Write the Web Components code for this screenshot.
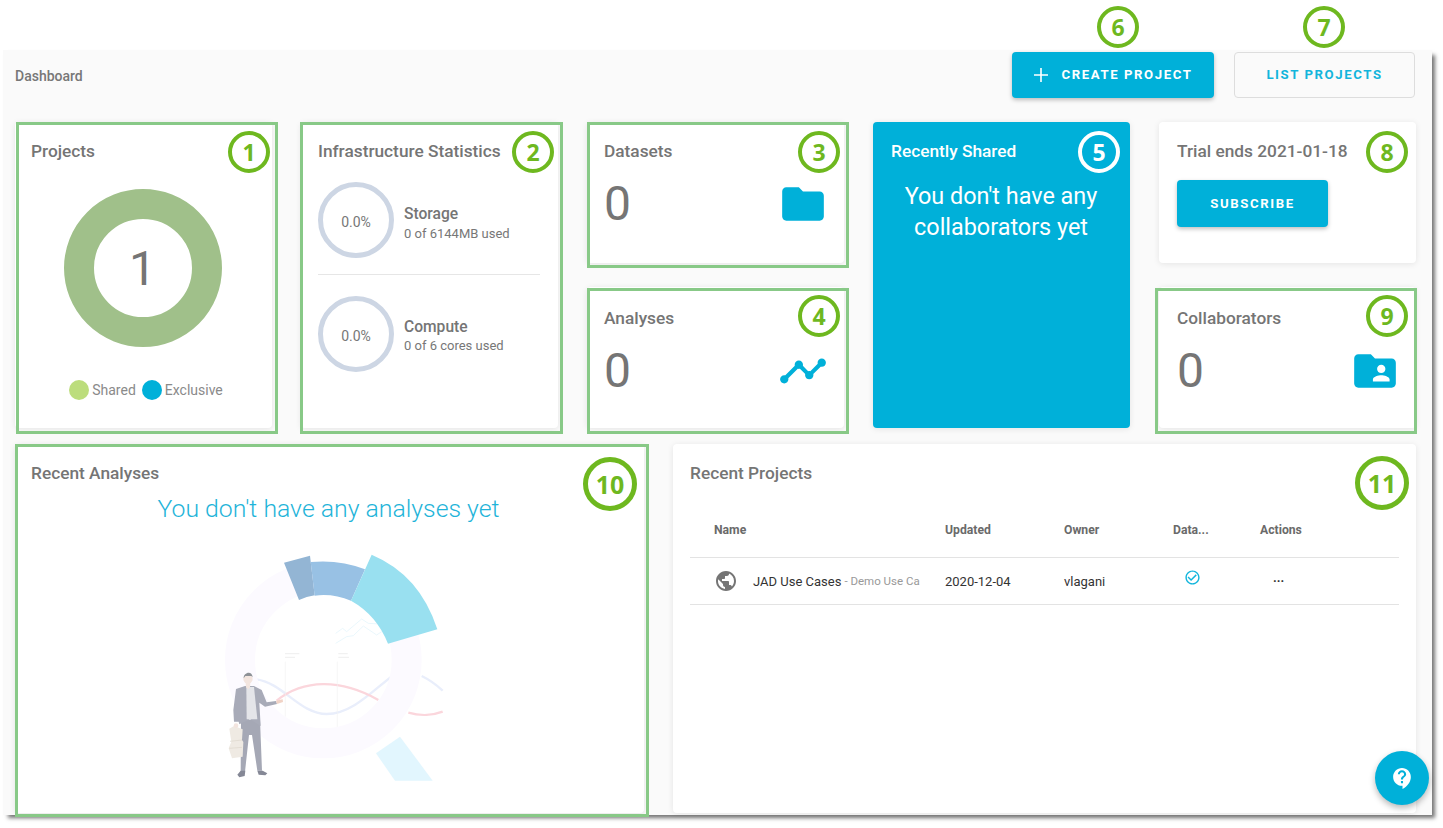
<!DOCTYPE html>
<html lang="en">
<head>
<meta charset="utf-8">
<title>Dashboard</title>
<style>
html,body{margin:0;padding:0;background:#fff;font-family:Roboto,"Liberation Sans",sans-serif;}
body{width:1443px;height:828px;overflow:hidden;position:relative;}
svg{display:block}
</style>
</head>
<body>
<dash-app>
  <dash-header slot="header"></dash-header>
  <project-donut></project-donut>
  <infra-card></infra-card>
  <stat-card heading="Datasets" value="0"><svg slot="icon" width="50" height="50" viewBox="0 0 24 24" fill="#00b0d9"><path d="M10 4H4c-1.1 0-1.99.9-1.99 2L2 18c0 1.1.9 2 2 2h16c1.1 0 2-.9 2-2V8c0-1.1-.9-2-2-2h-8l-2-2z"/></svg></stat-card>
  <stat-card heading="Analyses" value="0" style="padding-top:21px"><svg slot="icon" width="50" height="50" viewBox="0 0 24 24" fill="#00b0d9"><path d="M23 8c0 1.1-.9 2-2 2-.18 0-.35-.02-.51-.07l-3.56 3.55c.05.16.07.34.07.52 0 1.1-.9 2-2 2s-2-.9-2-2c0-.18.02-.36.07-.52l-2.55-2.55c-.16.05-.34.07-.52.07s-.36-.02-.52-.07l-4.55 4.56c.05.16.07.33.07.51 0 1.1-.9 2-2 2s-2-.9-2-2 .9-2 2-2c.18 0 .35.02.51.07l4.56-4.55C8.02 9.36 8 9.18 8 9c0-1.1.9-2 2-2s2 .9 2 2c0 .18-.02.36-.07.52l2.55 2.55c.16-.05.34-.07.52-.07s.36.02.52.07l3.55-3.56C19.02 8.35 19 8.18 19 8c0-1.1.9-2 2-2s2 .9 2 2z"/></svg></stat-card>
  <shared-card></shared-card>
  <trial-card></trial-card>
  <stat-card heading="Collaborators" value="0" style="padding-top:21px;padding-left:18px"><svg slot="icon" width="50" height="50" viewBox="0 0 24 24" fill="#00b0d9"><path fill-rule="evenodd" d="M20 6h-8l-2-2H4c-1.1 0-1.99.9-1.99 2L2 18c0 1.1.9 2 2 2h16c1.1 0 2-.9 2-2V8c0-1.1-.9-2-2-2zm-5 3c1.1 0 2 .9 2 2s-.9 2-2 2-2-.9-2-2 .9-2 2-2zm4 8h-8v-1c0-1.33 2.67-2 4-2s4 .67 4 2v1z"/></svg></stat-card>
  <analyses-card slot="bottom"></analyses-card>
  <projects-table slot="bottom"></projects-table>
</dash-app>
<help-fab></help-fab>

<note-box x="16" y="122" w="262" h="312"></note-box>
<note-box x="300" y="122" w="263" h="312"></note-box>
<note-box x="587" y="122" w="262" h="146"></note-box>
<note-box x="587" y="288" w="262" h="146"></note-box>
<note-box x="1155" y="288" w="262" h="146"></note-box>
<note-box x="15" y="444" w="634" h="373"></note-box>

<note-badge n="1" cx="249" cy="152"></note-badge>
<note-badge n="2" cx="533" cy="152"></note-badge>
<note-badge n="3" cx="819" cy="152"></note-badge>
<note-badge n="4" cx="819" cy="316"></note-badge>
<note-badge n="5" cx="1099" cy="152" white></note-badge>
<note-badge n="6" cx="1118" cy="27"></note-badge>
<note-badge n="7" cx="1324" cy="27"></note-badge>
<note-badge n="8" cx="1387" cy="152"></note-badge>
<note-badge n="9" cx="1387" cy="316"></note-badge>
<note-badge n="10" cx="610" cy="484" big></note-badge>
<note-badge n="11" cx="1382" cy="483" big></note-badge>

<script>
const base = `*{box-sizing:border-box} svg{display:block}`;
function comp(name, html, setup){
  customElements.define(name, class extends HTMLElement{
    constructor(){super();this.attachShadow({mode:'open'});}
    connectedCallback(){
      this.shadowRoot.innerHTML = typeof html==='function'?html(this):html;
      if(setup)setup(this);
    }
  });
}
const cardCss = `:host{display:block;box-sizing:border-box;background:#fff;border-radius:4px;box-shadow:0 1px 6px rgba(0,0,0,.09);padding:19px 16px 0 17px;color:#666;font-family:Roboto,"Liberation Sans",sans-serif;overflow:hidden}
h2{margin:0;font-size:17.3px;line-height:20px;font-weight:500;color:#757575;white-space:nowrap}`;

comp('dash-app', `<style>${base}
:host{display:block;box-sizing:border-box;width:1429px;height:765px;margin:50px 0 0 3px;background:#fafafa;padding:2px 16px 0 12px;box-shadow:4px 4px 4px -1px rgba(0,0,0,.55)}
.top{display:grid;grid-auto-flow:column;grid-template-columns:repeat(5,257px);grid-template-rows:141px 141px;column-gap:29px;row-gap:24px;margin-top:24px}
.bottom{display:grid;grid-template-columns:629px 743px;column-gap:29px;grid-template-rows:369px;margin-top:16px}
</style>
<slot name="header"></slot>
<div class="top"><slot></slot></div>
<div class="bottom"><slot name="bottom"></slot></div>`);

comp('dash-header', `<style>${base}
:host{display:flex;align-items:center;height:46px;font-family:Roboto,"Liberation Sans",sans-serif;padding-right:1px}
.t{font-size:14px;color:#777;font-weight:500;flex:1;padding-top:2px}
.b{height:46px;border-radius:4px;display:flex;align-items:center;justify-content:center;font-size:13.2px;font-weight:700;letter-spacing:1.58px;white-space:nowrap;padding-bottom:1px}
.c{width:202px;background:#00b0d9;color:#fff;box-shadow:0 2px 4px rgba(0,0,0,.25);gap:13px;padding-right:1px;margin-right:20px}
.l{width:181px;border:1px solid #ddd;color:#12b5dc;background:#fafafa}
</style>
<div class="t">Dashboard</div>
<div class="b c"><svg width="16" height="16" viewBox="0 0 16 16"><path d="M8 1v14M1 8h14" stroke="#fff" stroke-width="1.6"/></svg><span>CREATE PROJECT</span></div>
<div class="b l">LIST PROJECTS</div>`);

comp('project-donut', `<style>${base}${cardCss}
:host{grid-row:span 2;padding-left:16px}
.d{position:relative;width:158px;height:158px;margin:28px auto 0 auto;display:flex;align-items:center;justify-content:center;left:-1px}
.d svg{position:absolute;left:0;top:0}
.n{font-size:48px;font-weight:400;color:#757575;position:relative}
.lg{display:flex;align-items:center;justify-content:center;margin:33px 0 0 5px;font-size:14px;color:#8a8a8a;height:20px}
i{width:20px;height:20px;border-radius:50%;display:block;margin-right:3px}
.g{background:#bcdd7c}.b{background:#00b0d9;margin-left:6px}
</style>
<h2>Projects</h2>
<div class="d"><svg width="158" height="158" viewBox="0 0 158 158"><circle cx="79" cy="79" r="64" fill="none" stroke="#a0c08a" stroke-width="30"/></svg><span class="n">1</span></div>
<div class="lg"><i class="g"></i>Shared<i class="b"></i>Exclusive</div>`);

comp('infra-card', `<style>${base}${cardCss}
:host{grid-row:span 2}
.r{display:flex;gap:10px;align-items:flex-start}
.ring{width:76px;height:76px;border:5px solid #cdd6e4;border-radius:50%;display:flex;align-items:center;justify-content:center;font-size:14px;color:#777;padding-top:4px;flex:none}
.x{padding-top:22px}
.a{font-size:15.6px;font-weight:500;line-height:20px;color:#757575}
.s{font-size:13px;line-height:20px;color:#777;white-space:nowrap}
hr{border:0;height:1px;background:#e6e6e6;margin:16px 2px 21px 0}
</style>
<h2>Infrastructure Statistics</h2>
<div class="r" style="margin-top:21px"><div class="ring">0.0%</div><div class="x"><div class="a">Storage</div><div class="s">0 of 6144MB used</div></div></div>
<hr>
<div class="r"><div class="ring">0.0%</div><div class="x" style="padding-top:21px"><div class="a">Compute</div><div class="s" style="line-height:18px">0 of 6 cores used</div></div></div>`);

comp('stat-card', el=>`<style>${base}${cardCss}
.w{display:flex;align-items:center;justify-content:space-between;margin-top:15px;height:56px}
.v{font-size:48px;font-weight:400;color:#757575;line-height:56px}
</style>
<h2>${el.getAttribute('heading')}</h2>
<div class="w"><span class="v">${el.getAttribute('value')}</span><slot name="icon"></slot></div>`);

comp('shared-card', `<style>${base}${cardCss}
:host{grid-row:span 2;background:#00b0d9;padding-left:18px}
h2{color:#fff}
p{margin:20px 0 0 -1px;text-align:center;color:#fff;font-size:23.4px;font-weight:400;line-height:31px;padding-right:2px}
</style>
<h2>Recently Shared</h2>
<p>You don't have any<br>collaborators yet</p>`);

comp('trial-card', `<style>${base}${cardCss}
:host{padding-left:18px;overflow:visible}
.b{width:151px;height:47px;margin-top:19px;background:#00b0d9;color:#fff;font-size:13.2px;font-weight:700;letter-spacing:1.58px;border-radius:4px;display:flex;align-items:center;justify-content:center;box-shadow:0 2px 4px rgba(0,0,0,.25);padding-bottom:1px}
</style>
<h2>Trial ends 2021-01-18</h2>
<div class="b">SUBSCRIBE</div>`);

comp('analyses-card', `<style>${base}${cardCss}
:host{padding-left:16px}
p{margin:11px 2px 0 0;text-align:center;font-size:24.8px;font-weight:300;color:#1fb4d9;line-height:30px;white-space:nowrap}
svg{margin:16px 0 0 119px}
</style>
<h2>Recent Analyses</h2>
<p>You don't have any analyses yet</p>
<svg width="320" height="260" viewBox="0 0 960 780">
 <path d="M750 590L848 722H735L678 640z" fill="#e2f6fe"/>
 <path d="M320 418C400 430 450 522 530 522C610 522 680 440 725 410M815 408C840 420 860 435 878 452" fill="none" stroke="#e9eefb" stroke-width="7"/>
 <path d="M380 482C460 418 570 415 685 480M775 518C810 528 850 526 878 515" fill="none" stroke="#fbd6dc" stroke-width="7"/>
 <path d="M406 365V530M562 365V565" stroke="#f3f3f3" stroke-width="2"/>
 <path d="M405 341h43M405 352h30M565 341h28M565 352h32" stroke="#f1f1f1" stroke-width="4"/>
 <path d="M557 280L578 265L590 275L635 237L655 250L690 252M557 310L590 290L610 287L640 258L680 285L695 275" fill="none" stroke="#dff3fb" stroke-width="2"/>
 <circle cx="520" cy="360" r="250" fill="none" stroke="#fcfaff" stroke-width="90"/>
 <path d="M402 68L480 47L494 166Q470 170 447 180z" fill="#93b5d4"/>
 <path d="M482 66Q570 58 645 88L603 182Q550 160 494 167z" fill="#98c1e4"/>
 <path d="M665 44Q810 105 862 268L714 311Q680 225 603 182z" fill="#99e0f0"/>
 <path d="M273 540H330L336 692H322L306 585H297L285 695H272z" fill="#a5a8b5"/>
 <path d="M258 447L285 438H312L335 450L350 487L378 483L381 492L345 500L328 488L332 558L300 538L268 553L266 545L252 545L250 510z" fill="#a8abb8"/>
 <path d="M289 441H312L322 538H290z" fill="#e4e5e9"/>
 <path d="M262 704L272 692H286L284 708L268 712zM322 692H338L352 700L346 706L326 704z" fill="#858896"/>
 <circle cx="294" cy="417" r="14" fill="#f3e5df"/>
 <path d="M281 415C280 398 306 390 308 412L304 408H286z" fill="#8d9196"/>
 <path d="M287 428H301L300 442L295 448L288 442z" fill="#f3e5df"/>
 <path d="M378 482L398 478L399 486L381 492z" fill="#f1d3c6"/>
 <path d="M238 566L252 558L278 568L276 600L280 606L278 650L246 655L236 625L244 605z" fill="#efeae3"/>
 <path d="M240 604L276 600M238 625L276 622" stroke="#ddd6cc" stroke-width="2" fill="none"/>
 <circle cx="258" cy="557" r="7" fill="#f3e5df"/>
</svg>`);

comp('projects-table', `<style>${base}${cardCss}
:host{padding:19px 17px 0 17px;overflow:visible}
.t{margin-top:27px;width:709px}
.g{display:grid;grid-template-columns:255px 119px 109px 87px 1fr;align-items:center}
.h{height:48px;font-size:12.2px;font-weight:700;color:#6a6a6a;border-bottom:1px solid #e3e3e3;padding-bottom:8px}
.h>:first-child{padding-left:24px}
.h>*{white-space:nowrap}
.r{height:47px;font-size:13px;color:#333;border-bottom:1px solid #e3e3e3}
.n{display:flex;align-items:center;padding-left:24px;white-space:nowrap}
.n svg{flex:none;margin-right:15px}
.d{font-size:11.5px;color:#999;margin-left:3px;display:block}
.n b{font-weight:400;font-size:13px}
.dots{font-weight:700;font-size:13px;padding-left:13px;margin-top:-8px}
.ok{padding-left:11px;margin-top:-8px}
</style>
<h2>Recent Projects</h2>
<div class="t">
 <div class="g h"><div>Name</div><div>Updated</div><div>Owner</div><div>Data...</div><div>Actions</div></div>
 <div class="g r">
  <div class="n"><svg width="24" height="24" viewBox="0 0 24 24" fill="#757575"><path d="M12 2C6.48 2 2 6.48 2 12s4.48 10 10 10 10-4.48 10-10S17.52 2 12 2zm-1 17.93c-3.95-.49-7-3.85-7-7.93 0-.62.08-1.21.21-1.79L9 15v1c0 1.1.9 2 2 2v1.93zm6.9-2.54c-.26-.81-1-1.39-1.9-1.39h-1v-3c0-.55-.45-1-1-1H8v-2h2c.55 0 1-.45 1-1V7h2c1.1 0 2-.9 2-2v-.41c2.93 1.19 5 4.06 5 7.41 0 2.08-.8 3.97-2.1 5.39z"/></svg><b>JAD Use Cases</b><span class="d">- Demo Use Ca</span></div>
  <div>2020-12-04</div><div>vlagani</div>
  <div class="ok"><svg width="17" height="17" viewBox="0 0 24 24" fill="#12b5dc"><path d="M16.59 7.58L10 14.17l-3.59-3.58L5 12l5 5 8-8zM12 2C6.48 2 2 6.48 2 12s4.48 10 10 10 10-4.48 10-10S17.52 2 12 2zm0 18c-4.42 0-8-3.58-8-8s3.58-8 8-8 8 3.58 8 8-3.58 8-8 8z"/></svg></div>
  <div class="dots">...</div>
 </div>
</div>`);

comp('help-fab', `<style>${base}
:host{position:absolute;left:1375px;top:751px;width:54px;height:54px;border-radius:50%;background:#00b0d9;box-shadow:0 3px 6px rgba(0,0,0,.28);display:flex;align-items:center;justify-content:center}
</style>
<svg width="25" height="25" viewBox="0 0 24 24" fill="#fff"><path d="M11.5 2C6.81 2 3 5.81 3 10.5S6.81 19 11.5 19h.5v3c4.86-2.34 8-7 8-11.5C20 5.81 16.19 2 11.5 2zm1 14.5h-2v-2h2v2zm0-3.5h-2c0-3.25 3-3 3-5 0-1.1-.9-2-2-2s-2 .9-2 2h-2c0-2.21 1.79-4 4-4s4 1.79 4 4c0 2.5-3 2.75-3 5z"/></svg>`);

comp('note-box', el=>`<style>
:host{position:absolute;box-sizing:border-box;border:3px solid #88c987;pointer-events:none;
left:${el.getAttribute('x')}px;top:${el.getAttribute('y')}px;width:${el.getAttribute('w')}px;height:${el.getAttribute('h')}px}
</style>`);

comp('note-badge', el=>{
  const big=el.hasAttribute('big'), d=big?54:42, c=el.hasAttribute('white')?'#fff':'#6eb81f';
  return `<style>
:host{position:absolute;box-sizing:border-box;width:${d}px;height:${d}px;left:${el.getAttribute('cx')-d/2}px;top:${el.getAttribute('cy')-d/2}px;
border:${big?5:4}px solid ${c};border-radius:50%;display:flex;align-items:center;justify-content:center;
font:700 ${big?25:23}px/1 "Open Sans","Liberation Sans",sans-serif;color:${c}}
</style>${el.getAttribute('n')}`;
});
</script>
</body>
</html>
